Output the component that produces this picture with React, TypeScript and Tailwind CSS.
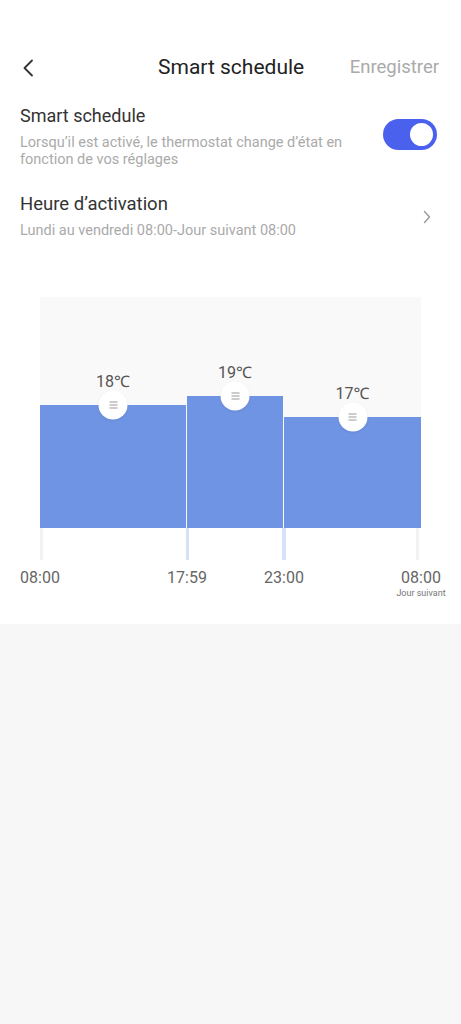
import React from 'react';

const font = { fontFamily: 'Roboto, "Noto Sans", sans-serif' };

const Handle: React.FC<{ label: string }> = ({ label }) => (
  <div className="absolute left-1/2 top-0 -translate-x-1/2 -translate-y-1/2 flex flex-col items-center">
    <span className="absolute bottom-[30px] text-[16px] leading-none text-[#555] whitespace-nowrap">{label}</span>
    <div className="h-[29px] w-[29px] rounded-full bg-white shadow-[0_1px_3px_rgba(0,0,0,0.08)] flex items-center justify-center">
      <div className="flex flex-col gap-[2px]">
        <span className="block h-px w-[8px] bg-[#999]"></span>
        <span className="block h-px w-[8px] bg-[#999]"></span>
        <span className="block h-px w-[8px] bg-[#999]"></span>
      </div>
    </div>
  </div>
);

export default function App() {
  return (
    <div className="min-h-[1024px] w-[461px] bg-[#f7f7f7]" style={font}>
      <div className="bg-white h-[624px] pt-[50px]">
        {/* header */}
        <div className="relative flex items-center justify-between h-[36px] px-[20px]">
          <svg width="12" height="18" viewBox="0 0 12 18" className="ml-[2px]">
            <path d="M10 1.5 L2.5 9 L10 16.5" fill="none" stroke="#333" strokeWidth="1.8" strokeLinecap="round" strokeLinejoin="round" />
          </svg>
          <span className="absolute left-[158px] text-[21px] text-[#222]">Smart schedule</span>
          <span className="text-[18.5px] text-[#aaa] mr-[2px]">Enregistrer</span>
        </div>

        {/* smart schedule toggle row */}
        <div className="flex items-start justify-between px-[20px] mt-[18px]">
          <div>
            <div className="text-[18px] leading-[24px] text-[#333]">Smart schedule</div>
            <div className="text-[14.5px] leading-[17px] text-[#aaa] mt-[6px] w-[345px]">
              Lorsqu’il est activé, le thermostat change d’état en fonction de vos réglages
            </div>
          </div>
          <div className="mt-[15px] mr-[4px] h-[31px] w-[54px] rounded-full bg-[#4a61ee] flex items-center justify-end p-[2px]">
            <div className="h-[27px] w-[27px] rounded-full bg-white border-[2px] border-[#4a61ee]"></div>
          </div>
        </div>

        {/* activation time row */}
        <div className="flex items-center justify-between px-[20px] mt-[24px]">
          <div>
            <div className="text-[18.5px] leading-[24px] text-[#333]">Heure d’activation</div>
            <div className="text-[14.5px] leading-[17px] text-[#aaa] mt-[6px]">Lundi au vendredi 08:00-Jour suivant 08:00</div>
          </div>
          <svg width="8" height="14" viewBox="0 0 8 14" className="mr-[10px] mt-[2px]">
            <path d="M1.5 1.5 L6.5 7 L1.5 12.5" fill="none" stroke="#999" strokeWidth="1.4" strokeLinecap="round" strokeLinejoin="round" />
          </svg>
        </div>

        {/* chart */}
        <div className="ml-[40px] mt-[58px] w-[381px]">
          <div className="h-[231px] bg-[#f9f9f9] flex items-end gap-px">
            <div className="relative h-[123px] w-[146px] bg-[#6f94e3]">
              <Handle label="18℃" />
            </div>
            <div className="relative h-[132px] w-[96px] bg-[#6f94e3]">
              <Handle label="19℃" />
            </div>
            <div className="relative h-[111px] flex-1 bg-[#6f94e3]">
              <Handle label="17℃" />
            </div>
          </div>
          <div className="relative h-[32px]">
            <span className="absolute left-0 top-0 h-full w-[3px] bg-[#f2f2f2]"></span>
            <span className="absolute left-[146px] top-0 h-full w-[3px] bg-[#d7e2f8]"></span>
            <span className="absolute left-[242px] top-0 h-full w-[4px] bg-[#d7e2f8]"></span>
            <span className="absolute right-[2px] top-0 h-full w-[3px] bg-[#f2f2f2]"></span>
          </div>
          <div className="relative h-[40px] text-[16px] text-[#666]">
            <span className="absolute left-0 top-[10px] -translate-x-1/2 leading-none">08:00</span>
            <span className="absolute left-[147px] top-[10px] -translate-x-1/2 leading-none">17:59</span>
            <span className="absolute left-[244px] top-[10px] -translate-x-1/2 leading-none">23:00</span>
            <div className="absolute left-[381px] top-[10px] -translate-x-1/2 flex flex-col items-center">
              <span className="leading-none">08:00</span>
              <span className="text-[9px] leading-none mt-[3px] text-[#777] whitespace-nowrap">Jour suivant</span>
            </div>
          </div>
        </div>
      </div>
    </div>
  );
}
